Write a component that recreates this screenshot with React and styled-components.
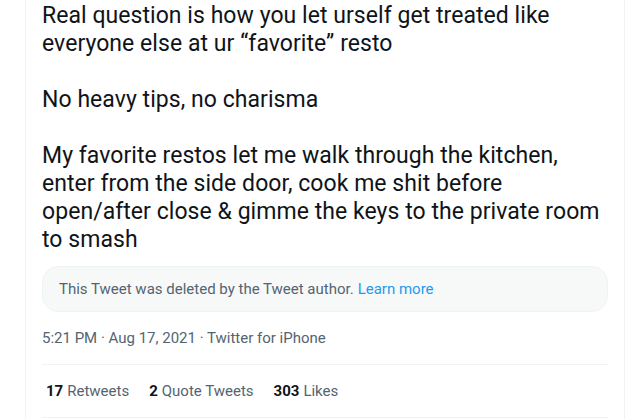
import React from "react";
import styled, { createGlobalStyle } from "styled-components";

const Global = createGlobalStyle`
  html, body { margin: 0; padding: 0; background: #ffffff; }
  body { font-family: Roboto, "Liberation Sans", sans-serif; }
  * { box-sizing: border-box; }
`;

const Page = styled.div`
  width: 644px;
  height: 419px;
  overflow: hidden;
  background: #ffffff;
  padding-left: 25px;
`;

const Card = styled.article`
  width: 600px;
  min-height: 419px;
  border-left: 1px solid #eff3f4;
  border-right: 1px solid #eff3f4;
  padding: 2px 16px 0 16px;
  display: flex;
  flex-direction: column;
`;

const Body = styled.div`
  font-size: 23px;
  line-height: 28px;
  color: #0f1419;
  letter-spacing: 0.05px;
`;

const Paragraph = styled.p`
  margin: 0;
  & + & { margin-top: 28px; }
`;

const Notice = styled.div`
  margin-top: 12px;
  height: 46px;
  border: 1px solid #eff3f4;
  background: #f7f9f9;
  border-radius: 16px;
  padding: 0 16px;
  display: flex;
  align-items: center;
  font-size: 15px;
  color: #536471;
`;

const Link = styled.a`
  color: #1d9bf0;
  text-decoration: none;
  margin-left: 4px;
`;

const Meta = styled.div`
  margin-top: 16px;
  padding-bottom: 16px;
  font-size: 15px;
  line-height: 20px;
  color: #536471;
  border-bottom: 1px solid #eff3f4;
`;

const Stats = styled.div`
  display: flex;
  gap: 20px;
  padding: 16px 4px;
  font-size: 15px;
  line-height: 20px;
  border-bottom: 1px solid #eff3f4;
`;

const Stat = styled.span`
  color: #536471;
`;

const Count = styled.b`
  color: #0f1419;
  font-weight: 700;
  margin-right: 4px;
`;

export default function App() {
  return (
    <>
      <Global />
      <Page>
        <Card>
          <Body>
            <Paragraph>Real question is how you let urself get treated like everyone else at ur “favorite” resto</Paragraph>
            <Paragraph>No heavy tips, no charisma</Paragraph>
            <Paragraph>My favorite restos let me walk through the kitchen, enter from the side door, cook me shit before open/after close &amp; gimme the keys to the private room to smash</Paragraph>
          </Body>
          <Notice>
            This Tweet was deleted by the Tweet author.<Link href="#">Learn more</Link>
          </Notice>
          <Meta>5:21 PM · Aug 17, 2021 · Twitter for iPhone</Meta>
          <Stats>
            <Stat><Count>17</Count>Retweets</Stat>
            <Stat><Count>2</Count>Quote Tweets</Stat>
            <Stat><Count>303</Count>Likes</Stat>
          </Stats>
        </Card>
      </Page>
    </>
  );
}
